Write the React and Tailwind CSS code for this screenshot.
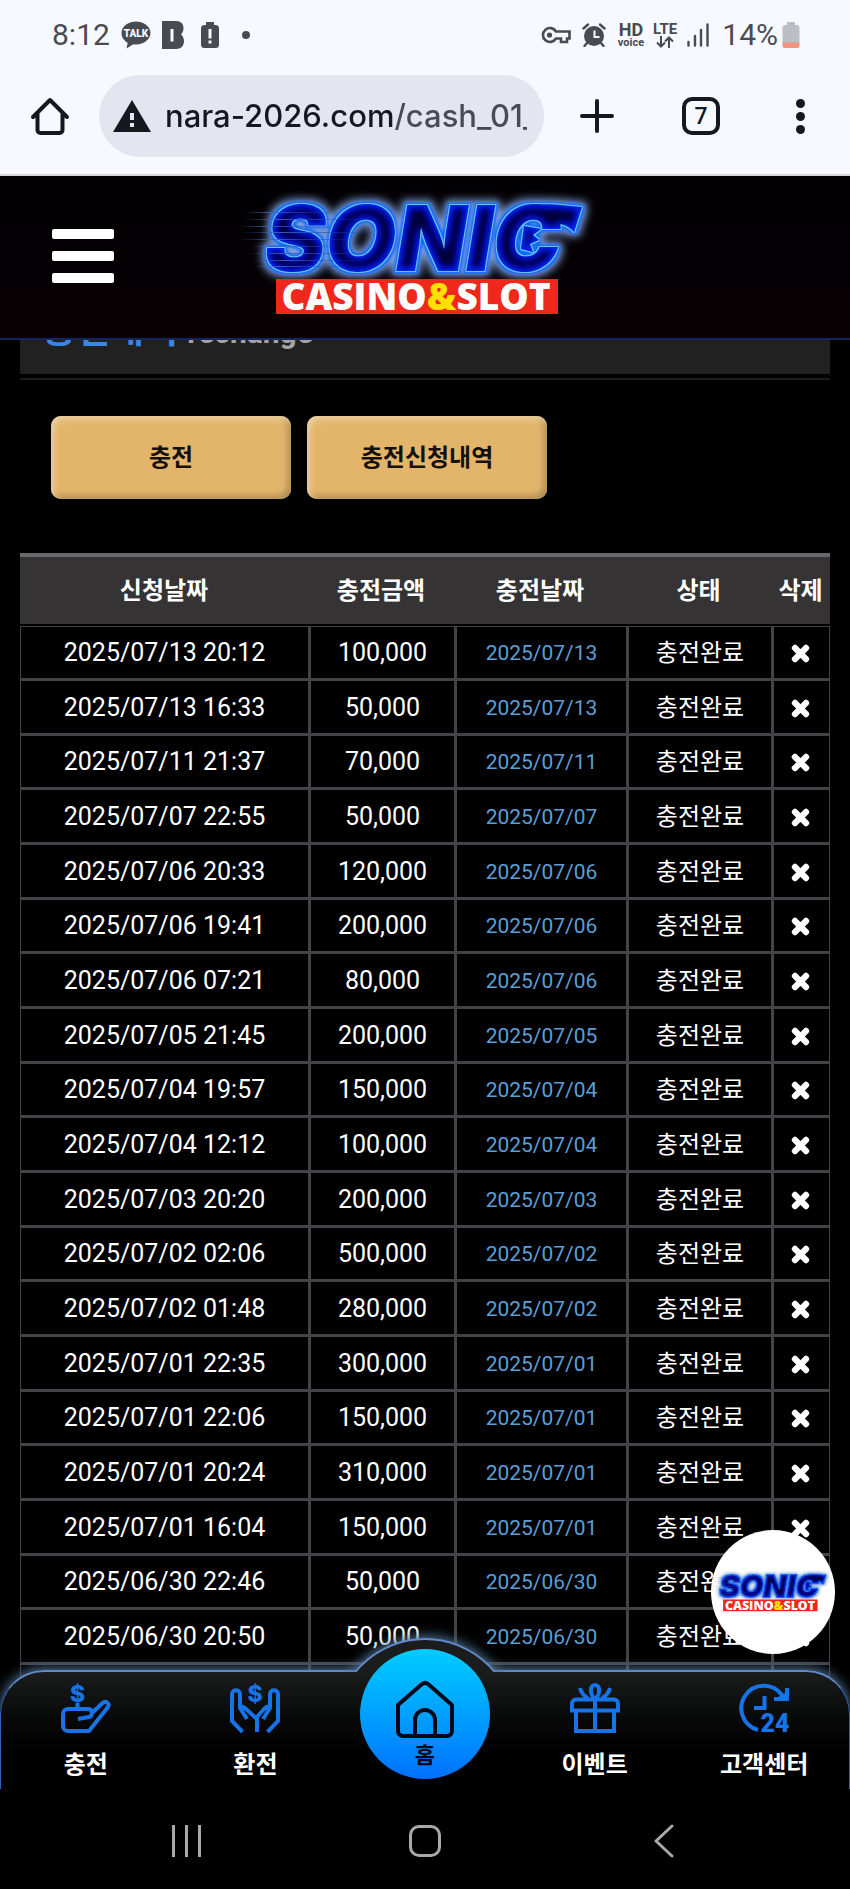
import React, { useId, useState } from 'react'
import { FaTimes } from 'react-icons/fa'

const rows = [
  { requested: '2025/07/13 20:12', amount: '100,000', charged: '2025/07/13' },
  { requested: '2025/07/13 16:33', amount: '50,000', charged: '2025/07/13' },
  { requested: '2025/07/11 21:37', amount: '70,000', charged: '2025/07/11' },
  { requested: '2025/07/07 22:55', amount: '50,000', charged: '2025/07/07' },
  { requested: '2025/07/06 20:33', amount: '120,000', charged: '2025/07/06' },
  { requested: '2025/07/06 19:41', amount: '200,000', charged: '2025/07/06' },
  { requested: '2025/07/06 07:21', amount: '80,000', charged: '2025/07/06' },
  { requested: '2025/07/05 21:45', amount: '200,000', charged: '2025/07/05' },
  { requested: '2025/07/04 19:57', amount: '150,000', charged: '2025/07/04' },
  { requested: '2025/07/04 12:12', amount: '100,000', charged: '2025/07/04' },
  { requested: '2025/07/03 20:20', amount: '200,000', charged: '2025/07/03' },
  { requested: '2025/07/02 02:06', amount: '500,000', charged: '2025/07/02' },
  { requested: '2025/07/02 01:48', amount: '280,000', charged: '2025/07/02' },
  { requested: '2025/07/01 22:35', amount: '300,000', charged: '2025/07/01' },
  { requested: '2025/07/01 22:06', amount: '150,000', charged: '2025/07/01' },
  { requested: '2025/07/01 20:24', amount: '310,000', charged: '2025/07/01' },
  { requested: '2025/07/01 16:04', amount: '150,000', charged: '2025/07/01' },
  { requested: '2025/06/30 22:46', amount: '50,000', charged: '2025/06/30' },
  { requested: '2025/06/30 20:50', amount: '50,000', charged: '2025/06/30' },
]

const Logo = ({ className }) => {
  const id = useId()

  return (
    <svg viewBox="0 0 370 130" className={className} role="img" aria-label="SONIC CASINO&SLOT">
      <defs>
        {/* inner glow, light rim, blue outline and outer glow in one pass */}
        <filter id={`${id}-neon`} filterUnits="userSpaceOnUse" x="0" y="0" width="370" height="130">
          <feMorphology in="SourceAlpha" operator="dilate" radius="5" result="wide" />
          <feGaussianBlur in="wide" stdDeviation="4" result="wideSoft" />
          <feFlood floodColor="#7b9fdc" />
          <feComposite in2="wideSoft" operator="in" result="glow" />
          <feMorphology in="SourceAlpha" operator="dilate" radius="3" result="mid" />
          <feGaussianBlur in="mid" stdDeviation="1" result="midSoft" />
          <feFlood floodColor="#0b6df0" />
          <feComposite in2="midSoft" operator="in" result="outline" />
          <feMorphology in="SourceAlpha" operator="dilate" radius="1" result="thin" />
          <feFlood floodColor="#62c4ff" />
          <feComposite in2="thin" operator="in" result="rim" />
          <feFlood floodColor="#0426ff" />
          <feComposite in2="SourceAlpha" operator="out" result="outside" />
          <feGaussianBlur in="outside" stdDeviation="4" result="soft" />
          <feComposite in="soft" in2="SourceAlpha" operator="in" result="edge" />
          <feMerge>
            <feMergeNode in="glow" />
            <feMergeNode in="outline" />
            <feMergeNode in="rim" />
            <feMergeNode in="SourceGraphic" />
            <feMergeNode in="edge" />
            <feMergeNode in="edge" />
          </feMerge>
        </filter>
        <linearGradient id={`${id}-speed`} x1="0" x2="1">
          <stop offset="0" stopColor="#3b5b9c" stopOpacity="0" />
          <stop offset="0.3" stopColor="#3f66b8" stopOpacity="0.9" />
          <stop offset="1" stopColor="#1238b0" stopOpacity="0.2" />
        </linearGradient>
      </defs>
      <g fill="#02043a" filter={`url(#${id}-neon)`}>
        <text x="25" y="80" fontFamily="Inter, sans-serif" fontWeight="900" fontStyle="italic" fontSize="91">SONIC</text>
        {/* quill spikes and the pointed tip of the C */}
        <path d="M292 14c18-2 34 1 50 2l-8 25c-6-7-14-9-24-9z" />
        <path d="M284 35l17 3-8 6 6 5-9 4 3 8-12-3z" />
      </g>
      <g fill={`url(#${id}-speed)`}>
        <rect x="4" y="21" width="86" height="1" />
        <rect x="2" y="28" width="120" height="1" />
        <rect x="0" y="35" width="90" height="1" />
        <rect x="2" y="41" width="130" height="1" />
        <rect x="0" y="48" width="110" height="1" />
        <rect x="10" y="55" width="90" height="1" />
        <rect x="8" y="62" width="120" height="1" />
        <rect x="14" y="69" width="100" height="1" />
        <rect x="12" y="75" width="90" height="1" />
      </g>
      <rect x="36" y="88" width="282" height="35" fill="#f0281c" />
      <text x="176" y="119" textAnchor="middle" fontFamily="'Open Sans', sans-serif" fontWeight="800" fontSize="37" fill="#fff">
        CASINO<tspan fill="#ffe000">&amp;</tspan>SLOT
      </text>
    </svg>
  )
}

const StatusBar = () => (
  <div className="flex h-[70px] items-center pr-[50px] pl-[52px] text-[#484b50]">
    <span className="text-[30px] leading-none">8:12</span>
    <svg viewBox="0 0 30 28" className="ml-[11px] h-7 w-[30px]" aria-hidden="true">
      <path d="M15 0.500C7 0.500 0.500 5.500 0.500 12c0 4.200 2.500 7.700 6.200 9.700L5.500 27.500l6.800-4.300c.9.100 1.800.2 2.700.2 8 0 14.500-5.100 14.500-11.400S23 .5 15 .5z" fill="currentColor" />
      <text x="15" y="16" textAnchor="middle" fontFamily="Roboto, sans-serif" fontWeight="900" fontSize="10" fill="#f6f9ff">TALK</text>
    </svg>
    <svg viewBox="0 0 22 28" className="ml-[11px] h-7 w-[22px]" aria-hidden="true">
      <path fillRule="evenodd" d="M0 0h14c5 0 7.500 3 7.500 7 0 3-1 5-2.500 6.500 2 1.500 3 4 3 6.500 0 5-3 8-8 8H0zM8.500 8v12.500h3V8z" fill="currentColor" />
    </svg>
    <svg viewBox="0 0 18 26" className="ml-[17px] h-[26px] w-[18px]" aria-hidden="true">
      <path d="M5 0h8v3h1.500A3.500 3.500 0 0 1 18 6.500v16a3.500 3.500 0 0 1-3.500 3.500h-11A3.500 3.500 0 0 1 0 22.500v-16A3.500 3.500 0 0 1 3.500 3H5z" fill="currentColor" />
      <path d="M7.500 7h3v9.500h-3zM7.500 18.500h3v3h-3z" fill="#f6f9ff" />
    </svg>
    <span className="ml-[23px] size-2 rounded-full bg-current" />

    <div className="ml-auto flex items-center">
      <svg viewBox="0 0 30 18" className="h-[18px] w-[30px]" fill="none" stroke="currentColor" aria-hidden="true">
        <path d="M15 5.500h13.500v7H26v3.500h-6v-3.500h-5a7 7 0 1 1 0-7z" strokeWidth="2.600" />
        <circle cx="8.500" cy="9" r="2.600" fill="currentColor" stroke="none" />
      </svg>
      <svg viewBox="0 0 24 24" className="ml-[11px] size-6" aria-hidden="true">
        <circle cx="12" cy="13" r="10" fill="currentColor" />
        <path d="M1.500 5.500l4.500-4M22.500 5.500L18 1.500M5 20l-2.500 3M19 20l2.500 3" stroke="currentColor" strokeWidth="2.400" strokeLinecap="round" />
        <path d="M12.500 7.500v6.500h5" fill="none" stroke="#f6f9ff" strokeWidth="2" />
      </svg>
      <span className="ml-3 flex flex-col items-center">
        <span className="text-[18px] leading-[15px] font-bold">HD</span>
        <span className="text-[11px] leading-[11px] font-bold">voice</span>
      </span>
      <span className="ml-[9px] flex flex-col items-center">
        <span className="text-[15px] leading-[13px] font-bold">LTE</span>
        <svg viewBox="0 0 18 12" className="h-3 w-[18px]" fill="none" stroke="currentColor" strokeWidth="2" aria-hidden="true">
          <path d="M5 0v10M1 6.500l4 4 4-4M13 12V2M9 5.500l4-4 4 4" />
        </svg>
      </span>
      <svg viewBox="0 0 22 24" className="ml-[10px] h-6 w-[22px]" stroke="currentColor" strokeWidth="2.400" strokeLinecap="round" aria-hidden="true">
        <path d="M1.500 19v3.500M8 13v9.500M14 7v15.500M20.500 1.500v21" />
      </svg>
      <span className="ml-[13px] text-[30px] leading-none">14%</span>
      <svg viewBox="0 0 18 26" className="ml-1 h-[26px] w-[18px]" aria-hidden="true">
        <path d="M5 0h8v3h1.500A3 3 0 0 1 17.500 6v15H.5V6a3 3 0 0 1 3-3H5z" fill="#bcbec4" />
        <path d="M.5 20.500h17V24a2 2 0 0 1-2 2h-13a2 2 0 0 1-2-2z" fill="#f0967c" />
      </svg>
    </div>
  </div>
)

const BrowserBar = () => (
  <div className="flex h-[106px] items-center border-b-2 border-[#d5d7db] pr-10 pb-3 pl-[30px] text-[#15181f]">
    <button type="button" aria-label="Home">
      <svg viewBox="0 0 40 40" className="size-10" fill="none" stroke="currentColor" strokeWidth="4" strokeLinejoin="round" strokeLinecap="round">
        <path d="M3 21L20 4l17 17M7.500 18v16a3 3 0 0 0 3 3h19a3 3 0 0 0 3-3V18" />
      </svg>
    </button>
    <div className="ml-[29px] flex h-[82px] min-w-0 flex-1 items-center rounded-full bg-[#e3e6ee] pr-[17px] pl-[14px]">
      <svg viewBox="0 0 38 32" className="h-8 w-[38px] shrink-0" aria-hidden="true">
        <path d="M19 0l19 32H0z" fill="currentColor" />
        <path d="M17 13h4v7h-4zM17 23h4v4h-4z" fill="#e3e6ee" />
      </svg>
      <input
        type="text"
        aria-label="Address"
        readOnly
        value="nara-2026.com/cash_01_"
        className="ml-[14px] min-w-0 flex-1 bg-[linear-gradient(90deg,#15181f_229px,#484b52_229px)] bg-clip-text font-['Inter',sans-serif] text-[31px] leading-[44px] font-medium text-transparent outline-none"
      />
    </div>
    <button type="button" aria-label="New tab" className="ml-9">
      <svg viewBox="0 0 34 34" className="size-[34px]" stroke="currentColor" strokeWidth="4" strokeLinecap="round">
        <path d="M17 2v30M2 17h30" />
      </svg>
    </button>
    <button type="button" aria-label="Tabs" className="ml-[68px] flex size-[38px] items-center justify-center rounded-[10px] border-4 border-current text-[23px] leading-none font-medium">
      7
    </button>
    <button type="button" aria-label="Menu" className="ml-[70px] flex w-5 flex-col items-center gap-1">
      <span className="size-[9px] rounded-full bg-current" />
      <span className="size-[9px] rounded-full bg-current" />
      <span className="size-[9px] rounded-full bg-current" />
    </button>
  </div>
)

const SiteHeader = () => (
  <header className="relative z-10 grid h-[164px] grid-cols-[1fr_auto_1fr] items-center border-b-2 border-[#17255f] bg-linear-to-b from-[#020003] to-[#080003] pb-0.5">
    <button type="button" aria-label="메뉴" className="ml-[52px] flex w-[62px] flex-col gap-3">
      <span className="h-[10px] w-full rounded-xs bg-white" />
      <span className="h-[10px] w-full rounded-xs bg-white" />
      <span className="h-[10px] w-full rounded-xs bg-white" />
    </button>
    <a href="#home"><Logo className="block w-[370px]" /></a>
  </header>
)

const ChargeTable = ({ items, onRemove }) => (
  <table className="w-full table-fixed border-separate border-spacing-0 text-center text-white">
    <colgroup>
      <col />
      <col className="w-[146px]" />
      <col className="w-[172px]" />
      <col className="w-[145px]" />
      <col className="w-[59px]" />
    </colgroup>
    <thead>
      <tr className="h-[73px] bg-[#363335] text-2xl whitespace-nowrap">
        {['신청날짜', '충전금액', '충전날짜', '상태', '삭제'].map((head) => (
          <th key={head} className="border-t-4 border-b-2 border-t-[#6b686b] border-b-black p-0 font-bold">{head}</th>
        ))}
      </tr>
    </thead>
    <tbody className="[&_td]:border-b-[3px] [&_td]:border-l-[3px] [&_td]:border-[#454246] [&_td]:p-0 [&_td]:pt-px [&_td:first-child]:border-l [&_td:last-child]:border-r [&_tr:first-child_td]:border-t">
      {items.map((row) => (
        <tr key={row.requested} className="h-[55px] text-[25px] leading-8 nth-[3n]:h-[54px]">
          <td>{row.requested}</td>
          <td>{row.amount}</td>
          <td className="text-[21px] text-[#5b9fd6]">{row.charged}</td>
          <td className="text-2xl">충전완료</td>
          <td>
            <button type="button" aria-label="삭제" className="block w-full pt-px pr-0.5" onClick={() => onRemove(row.requested)}>
              <FaTimes className="mx-auto size-[23px] stroke-white stroke-[40]" />
            </button>
          </td>
        </tr>
      ))}
      <tr className="h-[55px]">
        <td /><td /><td /><td /><td />
      </tr>
    </tbody>
  </table>
)

const iconProps = {
  viewBox: '0 0 50 50',
  className: 'size-[50px]',
  fill: 'none',
  stroke: 'currentColor',
  strokeWidth: 4,
  'aria-hidden': true,
}

const DepositIcon = () => (
  <svg {...iconProps}>
    <text x="16.500" y="19" textAnchor="middle" fontFamily="Inter, sans-serif" fontWeight="800" fontSize="23" fill="currentColor" stroke="none">$</text>
    <path d="M16.500 20v6M17 36l11-2c4-1 4-8-1-8H7a5 5 0 0 0-5 5v12a5 5 0 0 0 5 5h21l19-24c2-3-2-7-5.500-4L30 31" strokeLinejoin="round" />
  </svg>
)

const WithdrawIcon = () => (
  <svg {...iconProps}>
    <text x="25" y="19" textAnchor="middle" fontFamily="Inter, sans-serif" fontWeight="800" fontSize="23" fill="currentColor" stroke="none">$</text>
    <path d="M12.500 49L2 38V11c0-5 8-5 8 0v14l7 11M10 24c2-1 4 0 6 2l11 10M37.500 49L48 38V11c0-5-8-5-8 0v14l-7 11M40 24c-2-1-4 0-6 2l-7 8v15" />
  </svg>
)

const GiftIcon = () => (
  <svg {...iconProps}>
    <path d="M2 27.500v-7a4 4 0 0 1 4-4h38a4 4 0 0 1 4 4v7zM6 28v20h38V28M25 16v32M25 16c-5-4-6-14 0-14s5 10 0 14M18 15c-4-2-7-6-8-10M32 15c4-2 7-6 8-10" />
  </svg>
)

const SupportIcon = () => (
  <svg {...iconProps}>
    <path d="M19 47A22.500 22.500 0 1 1 43 12M48 5v11H35M25.500 13v12H15" />
    <path d="M40 13l8-4v7h-8z" fill="currentColor" stroke="none" />
    <text x="36" y="49" textAnchor="middle" fontFamily="Roboto, sans-serif" fontWeight="900" fontSize="25" fill="currentColor" stroke="none">24</text>
  </svg>
)

const NavItem = ({ icon, label }) => (
  <a href="#menu" className="flex flex-col items-center gap-3 pt-[11px]">
    <span className="text-[#1673e8]">{icon}</span>
    <span className="text-2xl leading-10 font-bold whitespace-nowrap text-white">{label}</span>
  </a>
)

const BottomNav = () => (
  <nav className="relative h-[119px] rounded-t-[44px] border-x border-t-2 border-[#6288cc] border-x-[#2f62b8] bg-linear-to-b from-[#1b1d1c] to-black shadow-[0_-2px_12px_#4f7392]">
    {/* raised arc around the home button */}
    <div className="absolute bottom-[117px] left-1/2 h-[54px] w-[220px] -translate-x-1/2 overflow-hidden">
      <div className="mx-auto mt-5 size-[182px] rounded-full border-2 border-[#6288cc] bg-[#1b1d1c] shadow-[0_-2px_12px_#4f7392]" />
    </div>
    <div className="grid grid-cols-5">
      <NavItem icon={<DepositIcon />} label="충전" />
      <NavItem icon={<WithdrawIcon />} label="환전" />
      <a href="#home" className="relative -mt-[23px] flex size-[130px] flex-col items-center justify-self-center rounded-full bg-linear-to-b from-[#00ccff] to-[#0070ff] pt-[31px] text-[#020817]">
        <svg viewBox="0 0 60 58" className="h-[58px] w-[60px]" fill="none" stroke="currentColor" strokeWidth="4" strokeLinejoin="round" aria-hidden="true">
          <path d="M8 56h44a5 5 0 0 0 5-5V25L33 4a5 5 0 0 0-6 0L3 25v26a5 5 0 0 0 5 5z" />
          <path d="M20 56V40a10 10 0 0 1 20 0v16" />
        </svg>
        <span className="mt-1 text-[22px] leading-7 font-bold">홈</span>
      </a>
      <NavItem icon={<GiftIcon />} label="이벤트" />
      <NavItem icon={<SupportIcon />} label="고객센터" />
    </div>
  </nav>
)

const SystemNav = () => (
  <div className="relative grid h-[100px] grid-cols-3 items-center justify-items-center bg-black px-[67px] pt-1 text-[#a9a9a9]">
    <button type="button" aria-label="Recents" className="flex gap-[10px]">
      <span className="h-8 w-[3px] bg-current" />
      <span className="h-8 w-[3px] bg-current" />
      <span className="h-8 w-[3px] bg-current" />
    </button>
    <button type="button" aria-label="Home" className="size-8 rounded-[10px] border-[3px] border-current" />
    <button type="button" aria-label="Back">
      <svg viewBox="0 0 20 34" className="h-[34px] w-5" fill="none" stroke="currentColor" strokeWidth="3" strokeLinecap="round" strokeLinejoin="round">
        <path d="M18 2L2 17l16 15" />
      </svg>
    </button>
  </div>
)

const App = () => {
  const [items, setItems] = useState(rows)

  const handleRemove = (requested) => {
    setItems(items.filter((item) => item.requested !== requested))
  }

  return (
    <div className="flex min-h-screen flex-col bg-black font-['Roboto','Noto_Sans_CJK_KR',sans-serif]">
      <div className="bg-[#f6f9ff]">
        <StatusBar />
        <BrowserBar />
      </div>
      <SiteHeader />

      <main className="flex-1 px-5">
        <div className="-mt-[30px] h-16 bg-[#222122] px-[22px]">
          <h1 className="text-[37px] leading-[42px] font-bold text-[#3a86e4]">
            충전내역 <span className="text-[30px] text-[#a3a3a3]">rechange</span>
          </h1>
        </div>
        <div className="mt-1 h-[2px] bg-[#1c1c1d]" />

        <div className="mt-9 mb-[54px] flex gap-4 px-[31px] text-2xl font-bold text-[#17100a]">
          <button type="button" className="h-[83px] w-60 rounded-[10px] bg-[#e3b56b] shadow-[inset_3px_3px_6px_#ecd2a2,inset_-3px_-3px_6px_#a88650]">충전</button>
          <button type="button" className="h-[83px] w-60 rounded-[10px] bg-[#e3b56b] shadow-[inset_3px_3px_6px_#ecd2a2,inset_-3px_-3px_6px_#a88650]">충전신청내역</button>
        </div>

        <ChargeTable items={items} onRemove={handleRemove} />
      </main>

      <footer className="sticky bottom-0 z-10 -mt-[52px]">
        <a href="#top" className="absolute right-[15px] bottom-[235px] flex size-[124px] items-center justify-center overflow-hidden rounded-full bg-white">
          <Logo className="w-full" />
        </a>
        <BottomNav />
        <SystemNav />
      </footer>
    </div>
  )
}

export default App
